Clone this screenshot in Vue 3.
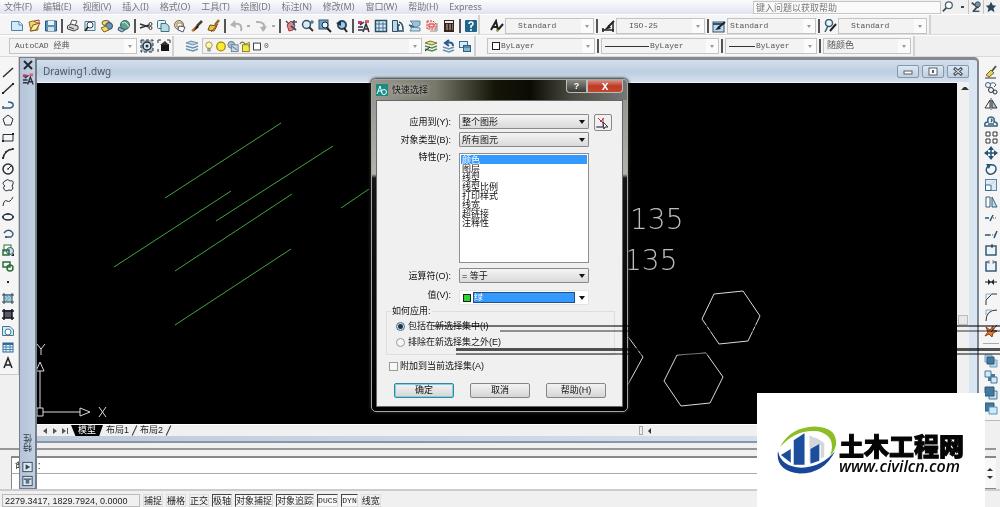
<script setup>
const menus = ['文件(F)', '编辑(E)', '视图(V)', '插入(I)', '格式(O)', '工具(T)', '绘图(D)', '标注(N)', '修改(M)', '窗口(W)', '帮助(H)', 'Express']

const D = 'fill="none" stroke="#26323c"'
const B = 'fill="none" stroke="#33607f"'

const icons = {
  new: '<path d="M1.500 2.500H9L12.500 5.500V11.500H1.500Z" fill="#d3eafa" stroke="#4c82a8"/><path d="M9 2.500V6H12.500" fill="#fff" stroke="#4c82a8"/>',
  open: '<path d="M2 3L6 2L11 4V11L4 12Z" fill="#f4d56a" stroke="#9a6a16"/><path d="M3 12L6 6L13 4L9 11Z" fill="#fbe9a4" stroke="#7c5a1c"/><path d="M7 2L12 1L12 4" fill="none" stroke="#b33"/>',
  save: '<path d="M1.500 2H12.500V12H1.500Z" fill="#5c93b8" stroke="#27587a"/><rect x="4" y="2" width="6" height="4" fill="#e8f2f8"/><rect x="4" y="8" width="6" height="4" fill="#d4e3ec"/>',
  print: '<path d="M4 6L6 1L11 2L9 7" fill="#fff" stroke="#555"/><path d="M1.500 7L5 5L12 7V10L8 12L1.500 10Z" fill="#cfd6da" stroke="#444"/><path d="M3 8L8 10" stroke="#444"/>',
  preview: '<path d="M2 2.500H12V11.500H2Z" fill="#e5f0f8" stroke="#4c7898"/><circle cx="7" cy="6" r="3" fill="#fff" stroke="#345"/><path d="M5 8L2 12" stroke="#333" stroke-width="2"/>',
  publish: '<ellipse cx="6" cy="4" rx="4" ry="2.500" fill="#f3e07a" stroke="#6b5a1a"/><circle cx="9" cy="7" r="3.500" fill="#6d93b8" stroke="#2f4960"/><path d="M1 9L6 7L9 11L4 13Z" fill="#f5dc68" stroke="#7c6220"/>',
  web: '<circle cx="8" cy="6" r="4.500" fill="#5fa58c" stroke="#2e6370"/><path d="M5 4Q8 2 10 5T12 8" fill="none" stroke="#d5efe2"/><path d="M2 8L8 11L5 13L1 11Z" fill="#8dbbd6" stroke="#456"/>',
  cut: '<path d="M1 5L10 8M1 9L10 6" stroke="#333" stroke-width="1.500"/><circle cx="11.500" cy="5" r="1.500" fill="none" stroke="#333"/><circle cx="11.500" cy="9" r="1.500" fill="none" stroke="#333"/>',
  copyc: '<rect x="1.500" y="1.500" width="8" height="8" rx="1" fill="#e6f3f6" stroke="#427182"/><path d="M5 4.500H10L13 7V12.500H5Z" fill="#b9dbe4" stroke="#427182"/>',
  paste: '<circle cx="6" cy="6" r="4.500" fill="#e6dcae" stroke="#77673a"/><path d="M4 4H9V8H4Z" fill="#f8f7ef" stroke="#887"/><path d="M6 7L12 8L10 13L5 11Z" fill="#fff" stroke="#556"/>',
  brush: '<path d="M12 2L7 7" stroke="#443" stroke-width="2.500"/><path d="M7 7L2 12" stroke="#c8701f" stroke-width="2"/><path d="M7 6L9 8L3 13Z" fill="#222"/>',
  match: '<path d="M12 1L8 6" stroke="#8a6d20" stroke-width="2.500"/><path d="M3 6L10 7L7 12L1 11Z" fill="#e7c83c" stroke="#6d5518"/><path d="M4 13L11 5" stroke="#a33"/>',
  undo: '<path d="M12 12Q14 3 4 5" fill="none" stroke="#b2b2b2" stroke-width="2"/><path d="M6 1L1 6L7 9Z" fill="#b2b2b2"/>',
  redo: '<path d="M2 3Q12 2 10 11" fill="none" stroke="#b2b2b2" stroke-width="2"/><path d="M6 8L13 7L9 13Z" fill="#b2b2b2"/>',
  pan: '<path d="M3 6L7 2L11 6L9 11L5 12Z" fill="#d88" stroke="#a33"/><path d="M10 1V6M8 3H13M2 2L5 5" stroke="#35546d" stroke-width="1.500"/><path d="M7 7L12 11" stroke="#35546d" stroke-width="2"/>',
  zoom: '<circle cx="5.500" cy="5.500" r="4" fill="#d9eaf7" stroke="#35546d" stroke-width="1.500"/><path d="M8 8L12 12" stroke="#333" stroke-width="2"/><path d="M11 1V5M9 3H13" stroke="#257"/>',
  zoomw: '<rect x="1" y="1" width="9" height="9" fill="#6ea3cb" stroke="#2b587c"/><circle cx="7" cy="6" r="3" fill="#e8f4fc" stroke="#223"/><path d="M9 9L13 13" stroke="#222" stroke-width="2"/>',
  zoomp: '<circle cx="7" cy="6" r="4" fill="#a9c8e0" stroke="#2a4a66" stroke-width="2"/><path d="M9 9L12 13" stroke="#222" stroke-width="2"/><path d="M1 4L6 2V7Z" fill="#16314a"/>',
  props: '<path d="M1 2H5V5H1Z" fill="#c2386b"/><path d="M8 1H12V4H8Z" fill="#d66"/><path d="M1 8H6M1 11H6M3 6L7 3" stroke="#334" stroke-width="1.500"/><path d="M6 13L9 5L12 13M7 10H12" fill="none" stroke="#334" stroke-width="1.500"/>',
  center: '<rect x="1.500" y="1.500" width="11" height="11" fill="#dcecf6" stroke="#2a5069" stroke-width="1.500"/><path d="M2 5H12M5 2V12M9 3V12M2 9H12" stroke="#45728f"/>',
  palettes: '<path d="M1.500 1.500H6.500V12.500H1.500Z" fill="#bcd7e8" stroke="#2a5069"/><path d="M8 3Q12 4 12 11M9 6H7V12H13" fill="none" stroke="#2a5069" stroke-width="1.500"/>',
  sheet: '<path d="M2 2H12V6L9 8H2L5 5Z" fill="#9cc2d8" stroke="#5d8aa5"/><path d="M4 8L12 9V12H2Z" fill="#c7dde9" stroke="#5d8aa5"/><path d="M1 6L6 8" stroke="#2f5b77" stroke-width="1.500"/>',
  markup: '<path d="M2 2H8L11 5V10H2Z" fill="#fbdada" stroke="#c33" stroke-dasharray="2 1"/><path d="M4 5H9V8H4Z" fill="none" stroke="#c33"/><path d="M12 4V12H5" fill="none" stroke="#888"/>',
  calc: '<rect x="2" y="1" width="10" height="12" fill="#33231f"/><rect x="3" y="2" width="8" height="2" fill="#e9ece6"/><path d="M4 6H6M7 6H9M4 8H6M7 8H9M4 10H6M7 10H9M10 6H11M10 8H11M10 10H11" stroke="#d5b8a8"/>',
  help: '<rect x="1" y="1" width="12" height="12" rx="1" fill="#1f648b"/><path d="M5 5Q5 3 7 3T9 5Q9 6 7 7V9M7 10V12" fill="none" stroke="#fff" stroke-width="1.500"/>',
  textstyle: '<path d="M1 11L6 2L8 11M3 8H8" fill="none" stroke="#222" stroke-width="2"/><path d="M13 5L7 12" stroke="#222" stroke-width="2"/><path d="M8 10L9 12L6 13Z" fill="#c8a23c"/>',
  dimstyle: '<path d="M1 11H13M2 13V9M12 13V4" stroke="#222" stroke-width="1.500"/><path d="M13 2L7 8" stroke="#222" stroke-width="2"/><path d="M8 6L10 9L3 11Z" fill="#222"/>',
  tablestyle: '<rect x="1" y="3" width="11" height="10" fill="#c3d9ea" stroke="#2a5575"/><path d="M1 5H12" stroke="#2a5575" stroke-width="2"/><path d="M13 3L6 9" stroke="#222" stroke-width="2"/><path d="M7 7L9 10L3 11Z" fill="#222"/>',
  mleader: '<circle cx="6" cy="4" r="3.500" fill="none" stroke="#34607e" stroke-width="1.500"/><path d="M5 7L2 13" stroke="#34607e" stroke-width="1.500"/><path d="M13 5L7 12" stroke="#222" stroke-width="2"/>',
  gear: '<rect x="1" y="1" width="12" height="12" fill="#a9bccb" stroke="#333" stroke-dasharray="3 2"/><circle cx="7" cy="7" r="4" fill="#dfe8ee" stroke="#26323c" stroke-width="1.500"/><circle cx="7" cy="7" r="1.500" fill="#26323c"/>',
  mywork: '<path d="M1 4V1H4M10 1H13V4M1 10V13" fill="none" stroke="#333"/><rect x="4" y="5" width="8" height="7" fill="#151515"/><path d="M3 6L8 2L12 6Z" fill="#333"/>',
  layers: '<path d="M1 4L6 2L13 4L8 6Z" fill="#b7d3e6" stroke="#6b93af"/><path d="M1 7L8 9L13 7M1 10L8 12L13 10" fill="none" stroke="#6b93af" stroke-width="1.500"/>',
  layerset: '<path d="M1 4L6 2L13 4L8 6Z" fill="#e9e089" stroke="#6f7a30"/><path d="M1 7L8 9L13 7M1 10L8 12L13 10" fill="none" stroke="#598b50" stroke-width="1.500"/><path d="M1 12L6 8" stroke="#222"/>',
  layerprev: '<path d="M2 8L8 10L13 8M2 11L8 13L13 11" fill="none" stroke="#6b93b3" stroke-width="1.500"/><path d="M12 7Q12 2 5 4M8 1L4 4L8 7" fill="none" stroke="#255b8d" stroke-width="2"/>',
  layerstate: '<rect x="1.500" y="2.500" width="8" height="6" fill="#d9eaf5" stroke="#3a7090"/><rect x="5.500" y="6.500" width="7" height="6" fill="#86b4d1" stroke="#2f6282"/><path d="M5 8H13" stroke="#2f6282"/>',
  bulb: '<path d="M5 9Q2 6 4 3Q7 0 10 3Q12 6 9 9Z" fill="#fdf6ae" stroke="#94893a"/><path d="M5 10H9M5 12H9" stroke="#555"/>',
  sun: '<circle cx="7" cy="7" r="5" fill="#fbea2d" stroke="#a08c16" stroke-width="1.500"/>',
  vpfreeze: '<circle cx="5" cy="5" r="4" fill="#a4bccd" stroke="#5f7c92"/><rect x="5" y="5" width="8" height="8" fill="#c4d6e2" stroke="#5f7c92"/><path d="M6 7L12 11" stroke="#567"/>',
  lock: '<path d="M1 4Q4 0 7 4V6" fill="none" stroke="#7a7420" stroke-width="1.500"/><rect x="4" y="5" width="8" height="8" fill="#f2e646" stroke="#7c7416"/><path d="M8 4L12 2L12 8" fill="none" stroke="#7a7420"/>',
  swatch: '<rect x="3" y="3" width="8" height="8" fill="#fff" stroke="#222"/>',
  search: '<circle cx="8" cy="5" r="4" fill="#fff" stroke="#4a6172" stroke-width="1.500"/><path d="M5 8L1 12" stroke="#3c4d5a" stroke-width="2"/>',
  comm: '<path d="M2 2L10 8M4 12L9 6" stroke="#2f4a5e" stroke-width="2"/><circle cx="9" cy="4" r="3" fill="#7594aa" stroke="#345"/><path d="M3 12H11" stroke="#345" stroke-width="1.500"/>',
  star: '<path d="M7 1L9 5L13 5.500L10 8.500L11 13L7 10.500L3 13L4 8.500L1 5.500L5 5Z" fill="#2c4558"/>',
  line: `<path d="M2 12L12 3" ${D} stroke-width="1.500"/>`,
  xline: `<path d="M2 12L12 3" ${D} stroke-width="1.500"/><path d="M1 11H3V13H1ZM11 2H13V4H11Z" fill="#222"/>`,
  pline: `<path d="M2 11H9Q13 10 12 7Q11 5 7 5M2 9V12" ${B} stroke-width="1.500"/>`,
  polygon: `<path d="M7 2L12 6L10 12H4L2 6Z" ${D}/>`,
  rect: `<path d="M2 4.500H12V11H2Z" ${D}/><path d="M11 3H13V5H11ZM1 10H3V12H1Z" fill="#222"/>`,
  arc: `<path d="M2 13Q3 4 12 3" ${D} stroke-width="1.500"/><circle cx="2" cy="12" r="1" fill="#222"/><circle cx="5" cy="6" r="1" fill="#222"/><circle cx="12" cy="3" r="1" fill="#222"/>`,
  circle: `<circle cx="7" cy="7" r="5" ${D} stroke-width="1.500"/><path d="M7 7L10 4M6 7H8" stroke="#222"/>`,
  revcloud: `<path d="M4 3Q7 0 9 3Q13 2 12 6Q10 8 12 10Q11 14 8 12Q4 14 3 11Q1 9 4 8Q0 5 4 3Z" ${D}/>`,
  spline: `<path d="M2 12Q3 5 6 7T12 3" ${D}/>`,
  ellipse: `<ellipse cx="7" cy="7" rx="5" ry="3" ${D} stroke-width="1.500"/><path d="M1 7H3M11 7H13M7 3V5" stroke="#246" stroke-width="2"/>`,
  ellarc: `<path d="M3 6Q6 2 10 4Q14 7 10 10H6" ${B} stroke-width="1.500"/><circle cx="5" cy="10" r="1" fill="#222"/>`,
  insert: '<rect x="3" y="2" width="7" height="6" fill="#fff" stroke="#2a6e37"/><circle cx="9" cy="8" r="3.500" fill="#cfe2ee" stroke="#357"/><path d="M2 7H8V12H2Z" fill="none" stroke="#2a6e37" stroke-width="1.500"/><path d="M13 10V13H10Z" fill="#222"/>',
  block: '<rect x="2" y="3" width="7" height="5" fill="none" stroke="#2a6e37" stroke-width="1.500"/><circle cx="9" cy="9" r="3" fill="none" stroke="#2a6e37" stroke-width="1.500"/>',
  point: '<rect x="6" y="6" width="2" height="2" fill="#222"/>',
  hatch: '<rect x="3" y="3" width="8" height="8" fill="#a5cddc"/><path d="M1 4H13M1 11H13M3 2V13M11 2V13" stroke="#28404f"/><path d="M4 8L8 4M5 10L10 5" stroke="#6ba4bb"/>',
  gradient: '<rect x="3" y="3" width="8" height="8" fill="#555b66"/><path d="M1 4H13M1 11H13M3 2V13M11 2V13" stroke="#16191d" stroke-width="1.500"/>',
  region: '<path d="M1.500 2.500H9L12.500 6V11.500H1.500Z" fill="#d4e8f4" stroke="#44789a"/><circle cx="7" cy="8" r="3" fill="#fff" stroke="#44789a"/>',
  table: '<rect x="2" y="3" width="10" height="9" fill="#edf6fc" stroke="#2c6696"/><path d="M2 4H12" stroke="#2c6696" stroke-width="2"/><path d="M2 7H12M2 9.500H12M5 4V12M9 4V12" stroke="#4b83ad"/>',
  mtext: '<path d="M3 12L7 2L11 12M4 9H10" fill="none" stroke="#222" stroke-width="1.500"/>',
  erase: '<path d="M12 1L8 6" stroke="#555" stroke-width="2"/><path d="M7 5L10 8L5 12L2 10Z" fill="#e8d155" stroke="#77651e"/><path d="M1 13H12" stroke="#333"/>',
  copy: `<circle cx="4" cy="4" r="2.500" ${B}/><path d="M6 3Q10 0 12 4L10 6" ${B}/><circle cx="7" cy="9" r="2.500" ${D}/><circle cx="11" cy="11" r="2" ${D}/>`,
  mirror: '<path d="M6 3V11H1Z" fill="#fff" stroke="#333"/><path d="M8 3V11H13Z" fill="#a5c2d4" stroke="#333"/><path d="M7 1V13" stroke="#555"/>',
  offset: `<path d="M1 12H13Q14 8 10 8Q11 3 7 3T4 8Q0 8 1 12ZM4 10H10M7 5Q9 6 7 8" ${B} stroke-width="1.500"/>`,
  array: '<path d="M2 2H6V6H2ZM9 2H13V6H9ZM2 9H6V13H2ZM9 9H13V13H9Z" fill="#fff" stroke="#333"/>',
  move: '<path d="M7 2V12M2 7H12" stroke="#245574" stroke-width="1.500"/><path d="M7 0L10 4H4ZM7 14L10 10H4ZM0 7L4 4V10ZM14 7L10 4V10Z" fill="#245574"/>',
  rotate: '<path d="M5 3Q13 2 12 8Q10 13 5 12Q0 9 4 4" fill="none" stroke="#245574" stroke-width="1.500"/><path d="M2 2L7 2L5 7Z" fill="#245574"/>',
  scale: '<rect x="1.500" y="1.500" width="11" height="11" fill="#dceaf5" stroke="#5a86a5"/><path d="M1.500 7H7V12.500H1.500Z" fill="#fff" stroke="#356786"/><path d="M6 7L11 3" stroke="#b9cfdf"/>',
  stretch: '<path d="M2 2H6V12H2Z" fill="#fff" stroke="#355f7b"/><path d="M8 2L13 12H8Z" fill="#c6dceb" stroke="#355f7b"/>',
  trim: '<path d="M1 7H5M6 10L9 4" stroke="#245574" stroke-width="1.500"/><path d="M9 7H13" stroke="#555" stroke-dasharray="1 1"/>',
  extend: '<path d="M1 8H6M10 11L13 4" stroke="#245574" stroke-width="1.500"/><path d="M6 8H11" stroke="#555" stroke-dasharray="1 1"/>',
  breakpt: '<path d="M2 3H12V12H2Z" fill="#edf3f7" stroke="#335e7c" stroke-width="1.500"/><path d="M8 1V5" stroke="#222"/>',
  break: '<path d="M5 3H2V12H12V3H9" fill="#edf3f7" stroke="#335e7c" stroke-width="1.500"/><path d="M5 1V5M9 1V5" stroke="#888"/>',
  join: '<path d="M1 7H13" stroke="#222"/><path d="M7 7L4 4V10ZM7 7L10 4V10Z" fill="#222"/>',
  chamfer: '<path d="M2 13V8L8 2H13" fill="none" stroke="#333"/><path d="M2 7V2H8" fill="none" stroke="#86abc6"/>',
  fillet: '<path d="M2 13Q2 2 13 2" fill="none" stroke="#333"/><path d="M2 7V2H8" fill="none" stroke="#86abc6"/>',
  explode: '<path d="M2 3L6 6L9 2L9 6L13 7L9 9L8 13L5 10L1 12L4 8Z" fill="#dd7f2e" stroke="#8c3920"/><path d="M13 1L7 8" stroke="#222"/>',
  front: '<path d="M1 1H8V8H1Z" fill="#bfd5e5" stroke="#7aa0bd"/><path d="M6 6H13V13H6Z" fill="#bfd5e5" stroke="#7aa0bd"/><path d="M3 3H10V10H3Z" fill="#44799f" stroke="#2b5a7e"/>',
  back: '<path d="M4 4H11V11H4Z" fill="#44799f"/><path d="M1 1H7V7H1Z" fill="#d7e6f1" stroke="#44799f"/><path d="M7 7H13V13H7Z" fill="#d7e6f1" stroke="#44799f"/>',
  above: '<path d="M5 5H13V13H5Z" fill="#c8deed" stroke="#4c7ba0"/><path d="M1 1H10V10H1Z" fill="#44799f" stroke="#2b5a7e"/>',
  under: '<path d="M1 1H10V9H1Z" fill="#44799f" stroke="#2b5a7e"/><path d="M5 5H13V12H5Z" fill="#cfe8f5" stroke="#4c9ac0"/>'
}

const standard = [
  ['new', 'open', 'save'],
  ['print', 'preview', 'publish', 'web'],
  ['cut', 'copyc', 'paste', 'brush', 'match'],
  ['undo', 'redo'],
  ['pan', 'zoom', 'zoomw', 'zoomp'],
  ['props', 'center', 'palettes', 'sheet', 'markup', 'calc'],
  ['help']
]
const styles = [
  { icon: 'textstyle', value: 'Standard' },
  { icon: 'dimstyle', value: 'ISO-25' },
  { icon: 'tablestyle', value: 'Standard', near: true },
  { icon: 'mleader', value: 'Standard' }
]
const drawTools = ['line', 'xline', 'pline', 'polygon', 'rect', 'arc', 'circle', 'revcloud', 'spline', 'ellipse', 'ellarc', 'insert', 'block', 'point', 'hatch', 'gradient', 'region', 'table', 'mtext']
const modifyTools = ['erase', 'copy', 'mirror', 'offset', 'array', 'move', 'rotate', 'scale', 'stretch', 'trim', 'extend', 'breakpt', 'break', 'join', 'chamfer', 'fillet', 'explode']
const orderTools = ['front', 'back', 'above', 'under']
const greenLines = [
  [165, 198, 281, 123], [114, 267, 231, 191], [216, 221, 333, 146],
  [175, 271, 292, 194], [175, 325, 291, 249], [341, 208, 369, 189]
]
const properties = ['颜色', '图层', '线型', '线型比例', '打印样式', '线宽', '超链接', '注释性']
const modes = [
  { t: '捕捉' }, { t: '栅格' }, { t: '正交' }, { t: '极轴', on: true }, { t: '对象捕捉', on: true },
  { t: '对象追踪', on: true }, { t: 'DUCS', on: true, mono: true }, { t: 'DYN', on: true, mono: true }, { t: '线宽' }
]
</script>

<template>
  <div class="cad">
    <header>
      <nav class="menubar">
        <button v-for="m in menus" :key="m" type="button">{{ m }}</button>
        <div class="ask">
          <input type="text" aria-label="键入问题以获取帮助" value="键入问题以获取帮助">
          <button type="button" class="ib" aria-label="search"><svg viewBox="0 0 14 14" v-html="icons.search" /></button>
          <i class="tiny" />
          <button type="button" class="ib boxed" aria-label="communication"><svg viewBox="0 0 14 14" v-html="icons.comm" /></button>
          <button type="button" class="ib" aria-label="favorites"><svg viewBox="0 0 14 14" v-html="icons.star" /></button>
        </div>
      </nav>

      <div class="bars">
        <div class="bar first">
          <template v-for="(g, gi) in standard" :key="gi">
            <i v-if="gi" class="sep" />
            <div class="group">
              <template v-for="n in g" :key="n">
                <button type="button" class="ib" :aria-label="n"><svg viewBox="0 0 14 14" v-html="icons[n]" /></button>
                <i v-if="gi === 3" class="tiny" />
              </template>
            </div>
          </template>
        </div>
        <div class="bar stylebar">
          <template v-for="(s, si) in styles" :key="si">
            <i v-if="si" class="sep" />
            <button type="button" class="ib" :aria-label="s.icon"><svg viewBox="0 0 14 14" v-html="icons[s.icon]" /></button>
            <label class="drop stylebox" :class="{ near: s.near }"><select :aria-label="s.icon"><option>{{ s.value }}</option></select></label>
          </template>
        </div>
      </div>

      <div class="bars second">
        <div class="bar workspace">
          <label class="drop wsbox"><select aria-label="workspace"><option>AutoCAD 经典</option></select></label>
          <button v-for="n in ['gear', 'mywork']" :key="n" type="button" class="ib" :aria-label="n"><svg viewBox="0 0 14 14" v-html="icons[n]" /></button>
        </div>
        <div class="bar layerbar">
          <button type="button" class="ib" aria-label="layers"><svg viewBox="0 0 14 14" v-html="icons.layers" /></button>
          <label class="drop layerbox">
            <svg v-for="n in ['bulb', 'sun', 'vpfreeze', 'lock', 'swatch']" :key="n" viewBox="0 0 14 14" v-html="icons[n]" />
            <select aria-label="layer"><option>0</option></select>
          </label>
          <button v-for="n in ['layerset', 'layerprev', 'layerstate']" :key="n" type="button" class="ib" :aria-label="n"><svg viewBox="0 0 14 14" v-html="icons[n]" /></button>
        </div>
        <div class="bar objbar">
          <label class="drop colorbox"><i class="swatch" /><select aria-label="color"><option>ByLayer</option></select></label>
          <i class="sep" />
          <label class="drop ltbox"><i class="rule long" /><select aria-label="linetype"><option>ByLayer</option></select></label>
          <i class="sep" />
          <label class="drop lwbox"><i class="rule" /><select aria-label="lineweight"><option>ByLayer</option></select></label>
          <i class="sep" />
          <label class="drop psbox"><select aria-label="plot style"><option>随颜色</option></select></label>
        </div>
      </div>
    </header>

    <main>
      <aside class="tools left">
        <button v-for="n in drawTools" :key="n" type="button" class="ib" :aria-label="n"><svg viewBox="0 0 14 14" v-html="icons[n]" /></button>
      </aside>

      <section class="doc">
        <div class="doctitle">
          <span>Drawing1.dwg</span>
          <button type="button" aria-label="minimize"><svg viewBox="0 0 22 13"><rect x="7" y="6" width="8" height="3" fill="#fff" stroke="#555e6b" /></svg></button>
          <button type="button" aria-label="restore"><svg viewBox="0 0 22 13"><rect x="7" y="3" width="8" height="7" fill="#fff" stroke="#555e6b" /><rect x="10" y="5" width="2" height="3" fill="#555e6b" /></svg></button>
          <button type="button" aria-label="close"><svg viewBox="0 0 22 13"><path d="M7 3L15 10M15 3L7 10" stroke="#4f5864" stroke-width="3" /><path d="M8 4L14 9M14 4L8 9" stroke="#fff" /></svg></button>
        </div>
        <div class="view">
          <svg class="drawing">
            <g transform="translate(-37 -83)" fill="none" stroke="#dadada">
              <path v-for="(l, i) in greenLines" :key="i" :d="`M${l[0]} ${l[1]}L${l[2]} ${l[3]}`" stroke="#3fa53f" />
              <path d="M714 294L743 291L760 316L748 341L719 344L702 319Z" />
              <path d="M677 355L706 353L723 377L710 403L681 406L664 381Z" />
              <path d="M626 334L643 357L626 388" />
              <path d="M37 408H43V416H37ZM40 408V371M36 371L40 362L44 371ZM43 412H80M80 408L90 412L80 416Z" />
              <path d="M37 344L41 349L45 344M41 349V355M99 407L106 417M106 407L99 417" />
              <text x="630" y="229">135</text>
              <text x="624" y="270">135</text>
            </g>
          </svg>
          <div class="vscroll"><i class="up" /><i class="thumb" /></div>
        </div>
        <div class="tabs">
          <button type="button" aria-label="previous"><svg viewBox="0 0 10 10"><path d="M7 2V8L3 5Z" fill="#555" /></svg></button>
          <button type="button" aria-label="next"><svg viewBox="0 0 10 10"><path d="M3 2V8L7 5Z" fill="#555" /></svg></button>
          <button type="button" aria-label="last"><svg viewBox="0 0 10 10"><path d="M2 2V8L6 5Z" fill="#555" /><path d="M7.500 2V8" stroke="#555" /></svg></button>
          <button type="button" class="tab active">模型</button>
          <button type="button" class="tab">布局1</button>
          <i class="slash" />
          <button type="button" class="tab">布局2</button>
          <i class="slash" />
          <div class="hscroll"><i class="grip" /><svg viewBox="0 0 10 10"><path d="M6 2V8L3 5Z" fill="#333" /></svg></div>
        </div>
      </section>

      <aside class="tools right">
        <div class="stack">
          <button v-for="n in modifyTools" :key="n" type="button" class="ib" :aria-label="n"><svg viewBox="0 0 14 14" v-html="icons[n]" /></button>
        </div>
        <hr>
        <div class="stack order">
          <button v-for="n in orderTools" :key="n" type="button" class="ib" :aria-label="n"><svg viewBox="0 0 14 14" v-html="icons[n]" /></button>
        </div>
      </aside>
    </main>

    <section class="command">
      <div class="history">命令 :</div>
      <input type="text" aria-label="命令">
      <div class="cscroll"><i class="up" /><i class="down" /></div>
    </section>

    <footer>
      <output>2279.3417, 1829.7924, 0.0000</output>
      <button v-for="m in modes" :key="m.t" type="button" :class="{ on: m.on, mono: m.mono }">{{ m.t }}</button>
    </footer>

    <aside class="palette">
      <button type="button" class="ib" aria-label="close palette"><svg viewBox="0 0 14 14"><path d="M3 3L11 11M11 3L3 11" stroke="#222b35" stroke-width="2" /></svg></button>
      <svg class="pi" viewBox="0 0 14 14" v-html="icons.props" />
      <span>特性</span>
      <svg class="pi" viewBox="0 0 14 14"><rect x="2" y="2" width="10" height="10" fill="#dfe9f2" stroke="#34485b" /><path d="M5 4L10 7L5 10Z" fill="#34485b" /></svg>
      <svg class="pi" viewBox="0 0 14 14"><rect x="2" y="2" width="10" height="10" fill="#dfe9f2" stroke="#34485b" /><path d="M3 5H11M5 7H9M5 9H9" stroke="#34485b" stroke-width="1.500" /></svg>
    </aside>

    <form class="dialog" role="dialog" aria-label="快速选择" @submit.prevent>
      <div class="caption">
        <svg viewBox="0 0 12 12"><rect width="12" height="12" fill="#1d8b83" /><path d="M1 10L4 2L6 9M2 7H6" fill="none" stroke="#e5fffb" /><circle cx="8" cy="8" r="2.500" fill="none" stroke="#e5fffb" /></svg>
        <span>快速选择</span>
        <button type="button" class="q" aria-label="help">?</button>
        <button type="button" class="x" aria-label="close">x</button>
      </div>
      <div class="client">
        <div class="row">
          <label for="apply">应用到(Y):</label>
          <span class="combo"><select id="apply"><option>整个图形</option></select></span>
          <button type="button" class="pick" aria-label="选择对象"><svg viewBox="0 0 14 14"><path d="M2 11H8V2M3 2L8 7M9 2L5 6" fill="none" stroke="#b0384d" /><path d="M1 11H9" stroke="#345fa0" /><path d="M8 6L13 11L10 11L9 13Z" fill="#fff" stroke="#333" /></svg></button>
        </div>
        <div class="row two">
          <label for="type">对象类型(B):</label>
          <span class="combo"><select id="type"><option>所有图元</option></select></span>
        </div>
        <div class="row list">
          <label for="props">特性(P):</label>
          <select id="props" size="8">
            <option v-for="(p, i) in properties" :key="p" :selected="i === 0">{{ p }}</option>
          </select>
        </div>
        <div class="row op">
          <label for="oper">运算符(O):</label>
          <span class="combo"><select id="oper"><option>= 等于</option></select></span>
        </div>
        <div class="row val">
          <label for="value">值(V):</label>
          <span class="combo flat"><i /><select id="value"><option>绿</option></select></span>
        </div>
        <fieldset>
          <legend>如何应用:</legend>
          <label><input type="radio" name="how" checked>包括在新选择集中(I)</label>
          <label><input type="radio" name="how">排除在新选择集之外(E)</label>
        </fieldset>
        <label class="append"><input type="checkbox">附加到当前选择集(A)</label>
        <div class="actions">
          <button type="submit" class="ok">确定</button>
          <button type="button">取消</button>
          <button type="button">帮助(H)</button>
        </div>
      </div>
    </form>

    <div class="streaks"><i /><i /><i /><i /></div>

    <div class="brand">
      <svg viewBox="0 0 62 50">
        <path d="M3 22Q13 2 38 1Q62 2 60 20Q58 27 54 31Q61 11 42 6Q20 3 3 22Z" fill="#8cbf26" />
        <path d="M19 14L27 8V35L19 40ZM39 12L48 18V32L39 36ZM33 10L39 13V36L33 37Z" fill="#d3d6da" />
        <path d="M4 30L14 24V38ZM17 15L28 8V40H17ZM34 24L43 19V36L34 39Z" fill="#1d4d9d" />
        <path d="M15 24V40M29 9V41M44 20V36" stroke="#fff" />
        <path d="M1 26Q4 42 25 43Q46 42 59 26Q48 49 23 49Q-2 46 1 26Z" fill="#174796" />
      </svg>
      <div><strong>土木工程网</strong><em>www.civilcn.com</em></div>
    </div>
  </div>
</template>

<style>
body { margin: 0; overflow: hidden; }
</style>

<style scoped>
.cad {
  position: relative;
  display: flex;
  flex-direction: column;
  min-height: 100vh;
  overflow: hidden;
  background: #f0f0f0;
  color: #222;
  font: 9px/12px "Liberation Sans", "Noto Sans CJK SC", sans-serif;
}
* { box-sizing: border-box; }
button, input, select { margin: 0; padding: 0; border: 0; background: none; color: inherit; font: inherit; border-radius: 0; outline: 0; }
select { appearance: none; }
i { display: block; flex: none; }
.ib { flex: none; width: 14px; height: 14px; }
svg { display: block; }
.ib svg { width: 14px; height: 14px; }

.menubar { display: flex; align-items: center; height: 14px; padding-left: 4px; gap: 11px; background: linear-gradient(#fbfcfe, #dfe3f1); color: #777; font-family: "Noto Sans", "Noto Sans CJK SC", sans-serif; }
.menubar > button { flex: none; white-space: nowrap; line-height: 14px; }
.ask { display: flex; align-items: center; width: 247px; height: 14px; margin-left: auto; background: #f0f0f0; }
.ask input { flex: 1; min-width: 0; height: 13px; padding-left: 2px; border: 1px solid #c5c5c5; background: #fafafa; }
.ask .ib { width: 16px; padding-left: 1px; }
.ask .boxed { border: 1px solid #c5c5c5; border-width: 0 1px; }
.ask svg { width: 12px; height: 12px; }
.tiny { width: 3px; height: 2px; margin: 0 4px; background: #aaa; }
.ask .tiny { background: #444; }

.bars { display: flex; height: 21px; border-top: 1px solid #fff; border-bottom: 1px solid #dadada; }
.bar { display: flex; align-items: center; border-right: 2px solid #d2d2d2; background: #f5f5f5; }
.first { width: 480px; padding: 2px 0 0 10px; }
.group { display: flex; align-items: center; gap: 3px; }
.group .tiny { margin: 0 1px; }
.sep { width: 2px; height: 14px; margin: 0 3px; background: #555; }
.stylebar { padding: 2px 2px 0 10px; gap: 1px; }
.stylebar .sep { margin: 0 2px 0 1px; }
.drop { position: relative; display: flex; align-items: center; height: 16px; border: 1px solid #c4c4c4; background: #f3f3f3; color: #555; font-family: "Liberation Mono", "Noto Sans CJK SC", monospace; font-size: 8px; }
.drop::before { content: ""; position: absolute; top: 0; right: 0; width: 12px; height: 100%; background: #fbfbfb; }
.drop::after { content: ""; position: absolute; top: 6px; right: 4px; border: 2px solid transparent; border-top: 3px solid #999; }
.drop select { flex: 1; min-width: 0; height: 100%; padding-left: 1px; }
.stylebox { width: 89px; }
.stylebox select { padding-left: 12px; }
.stylebox.near select { padding-left: 2px; }
.second { height: 22px; }
.workspace { width: 174px; padding-left: 9px; gap: 3px; }
.wsbox { width: 128px; }
.wsbox select { padding-left: 5px; }
.layerbar { width: 302px; padding-left: 11px; gap: 3px; }
.layerbox { width: 220px; margin-right: -1px; }
.layerbox svg { flex: none; width: 12px; height: 13px; }
.objbar { padding: 0 2px 0 11px; }
.objbar .sep { margin: 0 2px; }
.colorbox { width: 108px; }
.swatch { width: 8px; height: 8px; margin-left: 4px; border: 1px solid #222; background: #fff; }
.ltbox { width: 118px; }
.lwbox { width: 92px; }
.psbox { width: 88px; font-size: 9px; }
.psbox select { padding-left: 3px; }
.rule { width: 26px; height: 1px; margin-left: 3px; background: #333; }
.rule.long { width: 44px; }

main { display: grid; grid-template-columns: 19px minmax(0, 1fr) 21px; flex: 1; min-height: 0; }
.tools { display: flex; flex-direction: column; align-items: center; background: #f5f5f5; }
.left { align-self: start; justify-content: space-between; height: 318px; padding: 8px 2px 4px 0; border-right: 1px solid #ccc; border-bottom: 1px solid #ccc; }
.right { align-self: start; padding: 8px 0 4px 2px; border-bottom: 1px solid #bbb; }
.stack { display: flex; flex-direction: column; justify-content: space-between; height: 273px; }
.stack.order { height: 62px; }
.right hr { width: 16px; margin: 5px 0 10px; border: 0; border-top: 1px solid #aaa; }
.doc { display: flex; flex-direction: column; min-width: 0; padding: 0 8px 5px 18px; border-top: 3px solid #85888d; border-right: 2px solid #7d858f; border-bottom: 2px solid #8b96a5; background: linear-gradient(90deg, #bccbdc, #d9e5f2); border-radius: 0 5px 0 0; }
.doctitle { display: flex; align-items: center; gap: 3px; height: 23px; padding-left: 6px; background: linear-gradient(#d4dfed, #bccee1 55%, #d6e0ed); border-bottom: 1px solid #eef3f8; color: #4d5665; font: 10px/16px "Noto Sans", sans-serif; }
.doctitle span { margin-right: auto; }
.doctitle button { width: 22px; height: 13px; border: 1px solid #8797ac; border-radius: 2px; background: linear-gradient(#dde7f2, #c0cfdf); }
.doctitle button svg { width: 22px; height: 13px; margin: -1px; }
.view { display: flex; flex: 1; min-height: 0; }
.drawing { flex: 1; min-width: 0; height: 341px; background: #000; }
.drawing text { fill: #bbb; stroke: none; font: 200 28px "DejaVu Sans", sans-serif; }
.vscroll { position: relative; width: 12px; background: #f0f0f0; }
.up, .down { border: 3px solid transparent; border-top: 0; border-bottom: 3px solid #333; }
.down { border-bottom: 0; border-top: 3px solid #333; }
.vscroll .up { margin: 4px 0 0 4px; }
.vscroll .thumb { position: absolute; top: 68%; left: 1px; width: 10px; height: 10px; border: 1px solid #bbb; background: #e8e8e8; }
.tabs { display: flex; align-items: center; height: 12px; padding-left: 3px; background: #f0f0f0; border-top: 1px solid #fff; }
.tabs > button { flex: none; height: 11px; line-height: 11px; }
.tabs svg { width: 10px; height: 10px; }
.tabs .active { width: 32px; margin-left: 1px; background: #000; color: #fff; clip-path: polygon(0 0, 100% 0, 88% 100%, 14% 100%); }
.tab + .tab { margin-left: 3px; }
.slash { width: 1px; height: 11px; margin: 0 5px; background: #333; transform: rotate(25deg); }
.hscroll { display: flex; align-items: center; flex: 1; padding-left: 59%; }
.hscroll .grip { width: 4px; height: 9px; margin-right: 2px; border: 1px solid #aaa; }
.hscroll { padding-left: 50%; }

.command { display: grid; grid-template-columns: minmax(0, 1fr) 13px; grid-template-rows: 18px 15px; margin: 5px 4px 0 0; padding: 6px 0 0 11px; border-top: 2px solid #979797; }
.history { padding-left: 3px; border-top: 2px solid #888; border-left: 1px solid #888; background: #fff; font-size: 10px; line-height: 15px; border-bottom: 1px solid #aaa; white-space: pre; }
.command input { grid-row: 2; background: #fff; border-left: 1px solid #888; }
.cscroll { grid-row: 1 / 3; grid-column: 2; display: flex; flex-direction: column; justify-content: center; gap: 5px; align-items: center; border: 1px solid #888; border-width: 2px 0 1px; background: #f8f8f8; }
footer { display: flex; align-items: center; gap: 3px; height: 18px; padding: 3px 0 0 2px; border-top: 2px solid #ccc; }
footer output { width: 138px; height: 13px; padding-left: 2px; border: 1px solid #bbb; line-height: 12px; white-space: nowrap; }
footer button { height: 13px; padding: 0; border: 1px solid #ddd; line-height: 12px; white-space: nowrap; }
footer button.on { border-color: #444 #ddd #ddd #444; background: #f8f8f8; }
footer .mono { font-family: "Liberation Mono", monospace; font-size: 8px; }

.palette { position: absolute; top: 57px; bottom: 18px; left: 19px; display: flex; flex-direction: column; align-items: center; width: 18px; border: 1px solid #747d89; border-right-width: 2px; background: linear-gradient(90deg, #b4c3d7, #c2d1e2); color: #333d49; }
.palette span { margin: auto 0 8px; writing-mode: vertical-rl; transform: rotate(180deg); line-height: 12px; }
.pi { width: 13px; height: 14px; }
.palette .pi:nth-child(2) { margin-right: -2px; }

.dialog { position: absolute; top: 79px; left: 371px; width: 257px; padding: 0 4px 4px; border: 1px solid #a6a69d; border-radius: 5px; background: linear-gradient(#8f908b 0, #b3b3ae 94px, #151515 98px, #000); box-shadow: 0 0 3px 1px #222; color: #111; }
.caption { display: flex; align-items: flex-start; height: 20px; margin: 0 -4px; padding: 0 4px; border-radius: 4px 4px 0 0; background: linear-gradient(90deg, #9a9a91 0, #77776a 25%, #151508 48%, #0b0b04 62%, #4a4a40 78%, #777 100%); }
.caption svg { width: 12px; height: 12px; margin: 4px 4px 0 0; }
.caption span { margin-right: auto; line-height: 20px; text-shadow: 0 0 4px #ddd; }
.caption button { width: 21px; height: 13px; border: 1px solid #bbb; border-top: 0; border-radius: 0 0 0 4px; background: linear-gradient(#8a8a84, #3a3a35); color: #fff; font-weight: 700; line-height: 11px; }
.caption .x { width: 36px; border-radius: 0 0 4px 0; background: linear-gradient(#d5968a, #bd3c26 50%, #c7452f); font-size: 12px; line-height: 8px; }
.client { padding: 13px 0 8px; border: 1px solid #666; background: #f0f0f0; }
.row { display: grid; grid-template-columns: 74px 130px 18px; column-gap: 8px; height: 15px; }
.row label { text-align: right; line-height: 17px; white-space: nowrap; }
.two { margin-top: 3px; }
.list { height: 110px; margin-top: 6px; }
.list label { line-height: 8px; }
.op { margin-top: 5px; }
.val { margin-top: 7px; }
.val label { line-height: 11px; }
.combo { position: relative; display: flex; align-items: center; height: 15px; border: 1px solid #8a8a8a; border-radius: 1px; background: linear-gradient(#f4f4f4, #dadada); }
.combo::after { content: ""; position: absolute; top: 5px; right: 3px; border: 3px solid transparent; border-top: 4px solid #111; border-bottom: 0; }
.combo select { flex: 1; min-width: 0; height: 13px; padding-left: 2px; }
.pick { width: 18px; height: 17px; margin-left: -3px; border: 1px solid #888; border-radius: 2px; background: #f0f0f0; }
.pick svg { width: 14px; height: 14px; }
#props { height: 110px; overflow: hidden; padding: 1px; border: 1px solid #8f8f8f; background: #fff; }
#props option { display: flex; align-items: center; height: 9px; min-height: 0; padding: 0 1px; overflow: visible; line-height: 9px; color: #111; }
#props option:checked { background: #39f linear-gradient(#39f, #39f); color: #fff; -webkit-text-fill-color: #fff; }
.flat { border-color: #e4e4e4; background: #fff; }
.flat i { width: 8px; height: 8px; margin: 0 2px 0 3px; border: 1px solid #222; background: #2dd42d; }
.flat select { flex: none; width: 102px; height: 11px; padding: 0; border: 1px solid #26507f; background: #39f; color: #fff; line-height: 9px; }
fieldset { display: flex; flex-direction: column; gap: 4px; min-width: 0; height: 50px; margin: 0 7px 0 9px; padding: 3px 8px; border: 1px solid #dedede; }
legend { margin-left: -4px; padding: 0 1px; line-height: 12px; }
fieldset label, .append { display: flex; align-items: center; height: 12px; line-height: 12px; }
input[type=radio], input[type=checkbox] { flex: none; appearance: none; width: 9px; height: 9px; margin: 0 3px 0 1px; border: 1px solid #999; background: #f7f7f7; }
input[type=radio] { border-radius: 50%; }
input[type=radio]:checked { border-color: #567; background: radial-gradient(#123a55 0 2px, #cfe4ef 3px); }
.append { margin: 5px 0 0 11px; }
.append input { margin-right: 2px; }
.actions { display: flex; gap: 16px; margin: 11px 16px 0 17px; }
.actions button { flex: 1; height: 15px; border: 1px solid #858585; border-radius: 2px; background: linear-gradient(#f3f3f3, #d5d5d5); line-height: 13px; }
.actions .ok { border-color: #36879f; box-shadow: inset 0 0 0 1px #7fd0e6; }

.streaks { position: absolute; inset: 325px 0 auto 433px; height: 32px; pointer-events: none; mix-blend-mode: multiply; }
.streaks i { position: absolute; right: 0; left: 0; height: 2px; background: #777; }
.streaks i:nth-child(2) { top: 5px; left: 67px; background: #999; }
.streaks i:nth-child(3) { top: 23px; left: 23px; height: 3px; background: #555; }
.streaks i:nth-child(4) { top: 28px; left: 23px; background: #888; }

.brand { position: absolute; right: 15px; bottom: 0; display: flex; align-items: center; width: 228px; height: 114px; padding-left: 20px; background: #fff; color: #050505; }
.brand > svg { flex: none; width: 61px; height: 50px; }
.brand div { display: flex; flex-direction: column; padding-top: 5px; }
.brand strong { margin-left: 1px; font: 900 25px/26px "Noto Sans CJK SC", sans-serif; -webkit-text-stroke: 1px #050505; }
.brand em { margin-left: 1px; font: italic 600 16px/16px "Open Sans", "Noto Sans", sans-serif; }
</style>
